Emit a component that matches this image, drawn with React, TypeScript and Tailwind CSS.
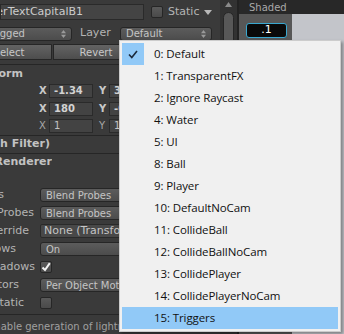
import React from 'react'

const layers = [
  { id: 0, name: 'Default', checked: true },
  { id: 1, name: 'TransparentFX' },
  { id: 2, name: 'Ignore Raycast' },
  { id: 4, name: 'Water' },
  { id: 5, name: 'UI' },
  { id: 8, name: 'Ball' },
  { id: 9, name: 'Player' },
  { id: 10, name: 'DefaultNoCam' },
  { id: 11, name: 'CollideBall' },
  { id: 12, name: 'CollideBallNoCam' },
  { id: 13, name: 'CollidePlayer' },
  { id: 14, name: 'CollidePlayerNoCam' },
  { id: 15, name: 'Triggers', hover: true },
]

function PopupArrows() {
  return (
    <svg width="5" height="8" viewBox="0 0 5 8" className="shrink-0">
      <path d="M0 3.2 L2.5 0 L5 3.2Z" fill="#9a9a9a" />
      <path d="M0 4.8 L2.5 8 L5 4.8Z" fill="#9a9a9a" />
    </svg>
  )
}

function Popup({ children, className }: { children: React.ReactNode; className: string }) {
  return (
    <div
      className={`flex h-[14px] shrink-0 items-center justify-between overflow-hidden whitespace-nowrap rounded-[3px] border border-[#262626] bg-linear-to-b from-[#5c5c5c] to-[#4c4c4c] pl-[5px] pr-[5px] text-[10px] text-[#c4c4c4] ${className}`}
    >
      <span>{children}</span>
      <PopupArrows />
    </div>
  )
}

function Checkbox({ checked }: { checked?: boolean }) {
  return (
    <div className="flex h-[12px] w-[12px] shrink-0 items-center justify-center rounded-[2px] border border-[#262626] bg-linear-to-b from-[#5a5a5a] to-[#4a4a4a]">
      {checked && (
        <svg width="10" height="10" viewBox="0 0 10 10">
          <path d="M1.5 5.5 L4 8 L8.8 1.2" stroke="#f2f2f2" strokeWidth="2" fill="none" />
        </svg>
      )}
    </div>
  )
}

function VecField({ axis, value, bold }: { axis: string; value: string; bold?: boolean }) {
  return (
    <>
      <span className={`w-[10px] shrink-0 text-[10px] ${bold ? 'font-bold text-[#c8c8c8]' : 'text-[#a8a8a8]'}`}>
        {axis}
      </span>
      <div
        className={`flex h-[14px] w-[44px] shrink-0 items-center border border-[#2a2a2a] bg-[#434343] pl-[4px] text-[10px] ${bold ? 'font-bold text-[#d2d2d2]' : 'text-[#c4c4c4]'}`}
      >
        {value}
      </div>
    </>
  )
}

function VecRow({ x, y, bold, className }: { x: string; y: string; bold?: boolean; className: string }) {
  return (
    <div className={`flex h-[14px] items-center pl-[39px] ${className}`}>
      <VecField axis="X" value={x} bold={bold} />
      <span className="w-[6px] shrink-0" />
      <VecField axis="Y" value={y} bold={bold} />
    </div>
  )
}

function Header({ title, end, className }: { title: string; end: string; className: string }) {
  return (
    <div className={`flex items-center ${className}`}>
      <div className={`flex justify-end overflow-hidden whitespace-nowrap text-[11px] font-bold text-[#c2c2c2] ${end}`}>
        {title}
      </div>
    </div>
  )
}

function Separator({ className = '' }: { className?: string }) {
  return <div className={`h-px shrink-0 bg-[#262626] ${className}`} />
}

const rendererRows = [
  { label: 'Light Probes', end: 'w-[4px]', kind: 'popup', value: 'Blend Probes' },
  { label: 'Reflection Probes', end: 'w-[34px]', kind: 'popup', value: 'Blend Probes' },
  { label: 'Anchor Override', end: 'w-[29px]', kind: 'object', value: 'None (Transform)' },
  { label: 'Cast Shadows', end: 'w-[16px]', kind: 'popup', value: 'On' },
  { label: 'Receive Shadows', end: 'w-[35px]', kind: 'check', checked: true },
  { label: 'Motion Vectors', end: 'w-[19px]', kind: 'popup', value: 'Per Object Motion' },
  { label: 'Lightmap Static', end: 'w-[24px]', kind: 'check' },
]

function Inspector() {
  return (
    <div className="flex w-[220px] shrink-0 flex-col overflow-hidden bg-[#3a3a3a] font-['DejaVu_Sans',sans-serif]">
      {/* object header */}
      <div className="mt-[4px] flex h-[16px] items-center">
        <div className="flex h-[16px] w-[144px] shrink-0 items-center border border-[#2a2a2a] bg-[#444444] text-[11px] text-[#cccccc]">
          <div className="flex w-[82px] justify-end overflow-hidden whitespace-nowrap">LetterTextCapitalB1</div>
        </div>
        <div className="ml-[7px]">
          <Checkbox />
        </div>
        <span className="ml-[5px] text-[11px] text-[#b4b4b4]">Static</span>
        <svg width="8" height="5" viewBox="0 0 8 5" className="ml-[5px] mt-[1px]">
          <path d="M0 0 L8 0 L4 5Z" fill="#b8b8b8" />
        </svg>
      </div>

      <div className="mt-[6px] flex h-[15px] items-center">
        <Popup className="ml-[-30px] w-[102px]">Untagged</Popup>
        <span className="ml-[8px] w-[40px] shrink-0 text-[11px] text-[#b4b4b4]">Layer</span>
        <Popup className="w-[92px]">Default</Popup>
      </div>

      <div className="mt-[3px] flex h-[16px] items-center">
        {['Select', 'Revert', 'Apply'].map((b, i) => (
          <div
            key={b}
            className={`flex h-[16px] w-[86px] shrink-0 items-center justify-center border border-[#262626] bg-linear-to-b from-[#636363] to-[#4d4d4d] text-[10px] text-[#c8c8c8] ${i === 0 ? 'ml-[-34px] rounded-l-[3px]' : 'ml-px'}`}
          >
            {b}
          </div>
        ))}
      </div>

      <Separator className="mt-[4px]" />
      <Header title="Transform" end="w-[23px]" className="h-[21px]" />
      <VecRow x="-1.34" y="3.27" bold className="mt-px" />
      <VecRow x="180" y="-0" bold className="mt-[4px]" />
      <VecRow x="1" y="1" className="mt-[3px]" />

      <Separator className="mt-[2px]" />
      <Header title="TextCapitalB1 (Mesh Filter)" end="w-[50px]" className="h-[21px]" />
      <Separator />
      <Header title="Mesh Renderer" end="w-[52px]" className="h-[20px]" />

      <div className="mt-[15px] flex flex-col">
        {rendererRows.map((r) => (
          <div key={r.label} className="flex h-[18px] items-center">
            <div className="w-[40px] shrink-0">
              <div className={`flex justify-end overflow-hidden whitespace-nowrap text-[11px] text-[#b4b4b4] ${r.end}`}>
                {r.label}
              </div>
            </div>
            {r.kind === 'popup' && <Popup className="w-[170px]">{r.value}</Popup>}
            {r.kind === 'object' && (
              <div className="flex h-[14px] w-[170px] shrink-0 items-center overflow-hidden whitespace-nowrap rounded-[2px] border border-[#2a2a2a] bg-[#484848] pl-[3px] text-[11px] text-[#c4c4c4]">
                {r.value}
              </div>
            )}
            {r.kind === 'check' && <Checkbox checked={r.checked} />}
          </div>
        ))}
      </div>

      <Separator className="mt-[2px]" />
      <div className="ml-[-12px] mt-[4px] whitespace-nowrap text-[10px] text-[#a0a0a0]">
        Enable generation of lightmaps for this GameObject.
      </div>
    </div>
  )
}

function Scrollbar() {
  return (
    <div className="flex w-[17px] shrink-0 flex-col items-center bg-[#323232]">
      <svg width="7" height="5" viewBox="0 0 7 5" className="mt-[2px]">
        <path d="M0 5 L3.5 0 L7 5Z" fill="#8a8a8a" />
      </svg>
      <div className="mt-[5px] h-[80px] w-[11px] rounded-full border border-[#262626] bg-[#585858]" />
    </div>
  )
}

function SceneView() {
  return (
    <div className="flex flex-1 flex-col font-['DejaVu_Sans',sans-serif]">
      <div className="flex h-[14px] items-center bg-[#282828] pl-[10px] text-[10px] text-[#a8a8a8]">Shaded</div>
      <div className="flex flex-1">
        <div className="w-[53px] shrink-0 bg-[#575757] pl-[7px] pt-[9px]">
          <div className="flex h-[15px] w-[41px] items-center justify-center rounded-[3px] border border-[#3aa8d0] bg-[#0a0a0a] text-[11px] text-white">
            .1
          </div>
        </div>
        <div className="flex-1 bg-[#c3c5ca]" />
      </div>
    </div>
  )
}

function LayerMenu() {
  return (
    <div className="absolute left-[119px] top-[40px] w-[222px] border border-[#cccccc] bg-[#f0f0f0] p-[2px] font-['Open_Sans',sans-serif] shadow-[2px_2px_3px_rgba(0,0,0,0.35)]">
      {layers.map((l) => (
        <div key={l.id} className={`flex h-[22px] items-center ${l.hover ? 'bg-[#91c9f7]' : ''}`}>
          <div className={`flex h-[22px] w-[22px] shrink-0 items-center justify-center ${l.checked ? 'bg-[#91c9f7]' : ''}`}>
            {l.checked && (
              <svg width="10" height="9" viewBox="0 0 10 9">
                <path d="M1 4.5 L3.8 7.5 L9 1" stroke="#1c2a3c" strokeWidth="1.6" fill="none" />
              </svg>
            )}
          </div>
          <span className="pl-[10px] text-[11.5px] tracking-[-0.1px] text-[#111111]">
            {l.id}: {l.name}
          </span>
        </div>
      ))}
    </div>
  )
}

export default function App() {
  return (
    <div className="relative flex h-[334px] w-[344px] overflow-hidden bg-[#3a3a3a]">
      <Inspector />
      <Scrollbar />
      <div className="w-[2px] shrink-0 bg-[#222222]" />
      <SceneView />
      <LayerMenu />
    </div>
  )
}
